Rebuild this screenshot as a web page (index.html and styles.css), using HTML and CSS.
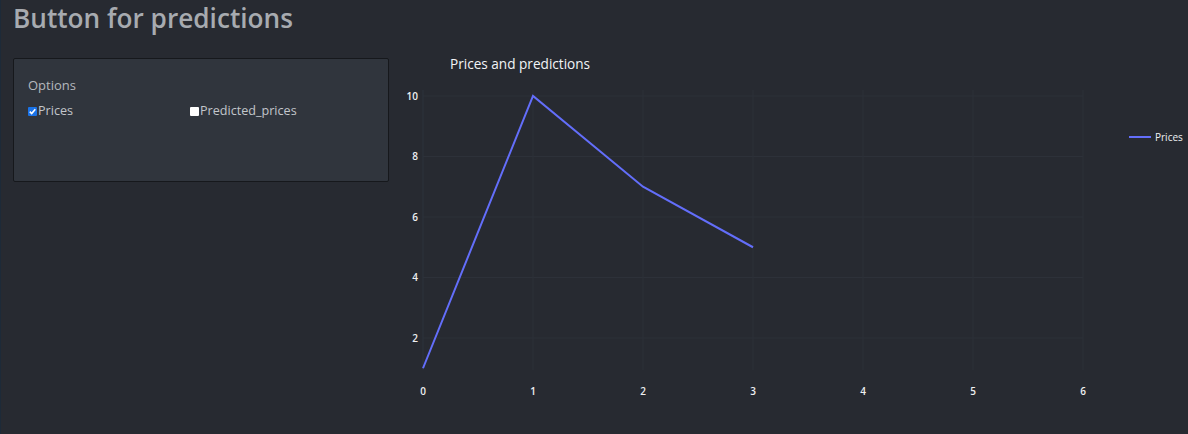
FILE: index.html
```html
<!DOCTYPE html>
<html>
<head>
<meta charset="utf-8">
<link rel="stylesheet" href="styles.css">
</head>
<body>
<div class="page">
  <h1 class="title">Button for predictions</h1>
  <div class="row">
    <div class="card">
      <div class="card-label">Options</div>
      <div class="options">
        <label class="opt"><span class="box checked"><svg viewBox="0 0 9 9" width="9" height="9"><path d="M1.8 4.6 L3.7 6.5 L7.3 2.3" fill="none" stroke="#fff" stroke-width="1.6"/></svg></span>Prices</label>
        <label class="opt"><span class="box"></span>Predicted_prices</label>
      </div>
    </div>
    <svg class="chart" width="788" height="384" viewBox="0 0 788 384">
      <g class="grid">
        <line x1="23" y1="46" x2="683" y2="46"/>
        <line x1="23" y1="106.5" x2="683" y2="106.5"/>
        <line x1="23" y1="167" x2="683" y2="167"/>
        <line x1="23" y1="227.5" x2="683" y2="227.5"/>
        <line x1="23" y1="288" x2="683" y2="288"/>
        <line x1="133" y1="40" x2="133" y2="320"/>
        <line x1="243" y1="40" x2="243" y2="320"/>
        <line x1="353" y1="40" x2="353" y2="320"/>
        <line x1="463" y1="40" x2="463" y2="320"/>
        <line x1="573" y1="40" x2="573" y2="320"/>
        <line x1="683" y1="40" x2="683" y2="320"/>
      </g>
      <line class="zero" x1="23" y1="40" x2="23" y2="320"/>
      <text class="ctitle" x="50" y="19">Prices and predictions</text>
      <g class="yt">
        <text x="18" y="49.5">10</text>
        <text x="18" y="110">8</text>
        <text x="18" y="170.5">6</text>
        <text x="18" y="231">4</text>
        <text x="18" y="291.5">2</text>
      </g>
      <g class="xt">
        <text x="23" y="345">0</text>
        <text x="133" y="345">1</text>
        <text x="243" y="345">2</text>
        <text x="353" y="345">3</text>
        <text x="463" y="345">4</text>
        <text x="573" y="345">5</text>
        <text x="683" y="345">6</text>
      </g>
      <polyline class="trace" points="23,318.25 133,46 243,136.75 353,197.25"/>
      <line class="trace" x1="729" y1="87" x2="751" y2="87"/>
      <text class="legend" x="755" y="90.5">Prices</text>
    </svg>
  </div>
</div>
</body>
</html>
```
FILE: styles.css
```css
html, body {
  margin: 0;
  padding: 0;
  background: #272a31;
}
body {
  width: 1188px;
  height: 434px;
  overflow: hidden;
  border-left: 1px solid #1d2a38;
  box-sizing: border-box;
  font-family: "Open Sans", "Liberation Sans", sans-serif;
}
.page {
  padding-left: 12px;
}
.title {
  margin: 0;
  font-size: 26.2px;
  font-weight: 600;
  line-height: 36px;
  color: #a7abb0;
  height: 58px;
}
.row {
  display: flex;
  align-items: flex-start;
  margin-top: -8px;
}
.card {
  margin-top: 8px;
  width: 376px;
  height: 124px;
  background: #30353d;
  border: 1px solid #16181c;
  border-radius: 2px;
  padding: 16px 14px 0 14px;
  box-sizing: border-box;
  font-family: "Open Sans", "Liberation Sans", sans-serif;
}
.card-label {
  font-size: 13px;
  color: #b4b8bd;
  line-height: 20px;
}
.options {
  display: grid;
  grid-template-columns: 162px 1fr;
  margin-top: 6px;
}
.opt {
  display: flex;
  align-items: center;
  font-size: 12.6px;
  color: #c2c6cb;
  line-height: 20px;
}
.box {
  width: 9px;
  height: 9px;
  background: #ffffff;
  display: inline-flex;
  margin-right: 1px;
  border-radius: 1px;
}
.box.checked {
  background: #1a73e8;
}
.chart {
  display: block;
  margin-left: 11px;
  margin-top: 0;
}
.grid line {
  stroke: #2d3139;
  stroke-width: 1;
}
.zero {
  stroke: #2c333d;
  stroke-width: 1;
}
.ctitle {
  font-family: "Open Sans", "Liberation Sans", sans-serif;
  font-size: 13.6px;
  fill: #f2f4f6;
}
.yt text {
  font-family: "Open Sans", "Liberation Sans", sans-serif;
  font-size: 10px;
  font-weight: 600;
  fill: #eef0f2;
  text-anchor: end;
}
.xt text {
  font-family: "Open Sans", "Liberation Sans", sans-serif;
  font-size: 10px;
  font-weight: 600;
  fill: #eef0f2;
  text-anchor: middle;
}
.trace {
  fill: none;
  stroke: #636efa;
  stroke-width: 2;
}
.legend {
  font-family: "Open Sans", "Liberation Sans", sans-serif;
  font-size: 10px;
  fill: #eef0f2;
}
```
